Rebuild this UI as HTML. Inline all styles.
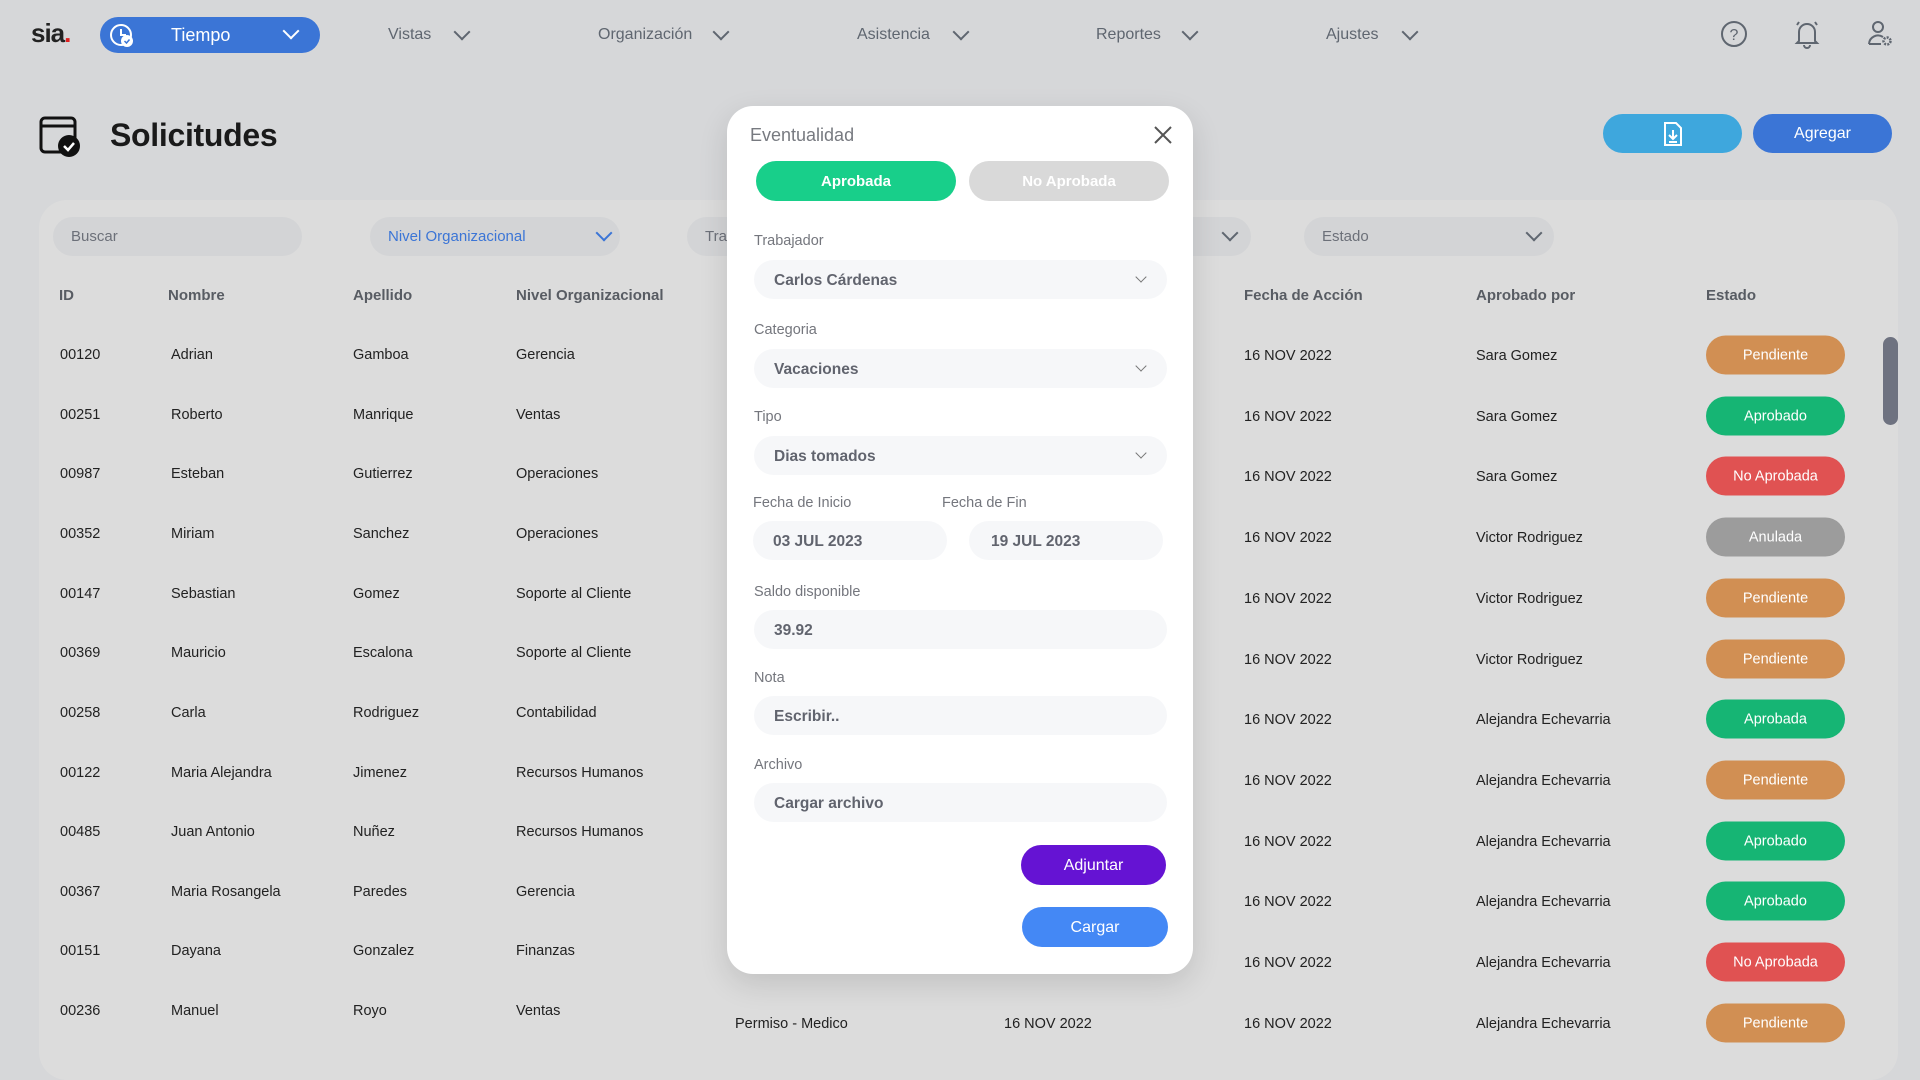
<!DOCTYPE html>
<html><head><meta charset="utf-8"><style>
*{margin:0;padding:0;box-sizing:border-box}
body{width:1920px;height:1080px;background:#d6d7d9;font-family:"Liberation Sans",sans-serif;position:relative;overflow:hidden;color:#222}
.a{position:absolute}
.nav{font-size:16px;color:#5f6670;top:26px}
.chev{position:absolute;width:12px;height:12px;border-right:2px solid #5f6670;border-bottom:2px solid #5f6670;transform:rotate(45deg)}
.card{left:39px;top:200px;width:1859px;height:880px;background:#dcdcdc;border-radius:28px}
.flt{position:absolute;top:217px;height:39px;border-radius:20px;background:#d3d4d6;font-size:15px;color:#6c7079;line-height:40px;padding-left:18px}
.th{position:absolute;top:287px;font-size:15px;color:#585c63;font-weight:bold}
.td{position:absolute;font-size:14.5px;color:#222;transform:translateY(-45%)}
.badge{position:absolute;left:1706px;width:139px;height:39px;border-radius:20px;color:#fff;font-size:14.5px;text-align:center;line-height:40px;transform:translateY(-50%)}
.P{background:#d18f53}.G{background:#16b574}.R{background:#e05252}.N{background:#9c9c9c}
.modal{left:727px;top:106px;width:466px;height:868px;background:#fff;border-radius:26px;box-shadow:0 10px 30px rgba(0,0,0,.12)}
.lbl{position:absolute;left:754px;font-size:14.5px;color:#74767d;transform:translateY(-45%)}
.inp{position:absolute;left:754px;width:413px;height:39px;border-radius:20px;background:#f6f7f9;font-size:15.5px;font-weight:bold;color:#61646e;line-height:41px;padding-left:20px}
.sc{position:absolute;right:22px;top:13px;width:8px;height:8px;border-right:1.5px solid #777;border-bottom:1.5px solid #777;transform:rotate(45deg)}
</style></head><body>
<div class="a" style="left:31px;top:18px;font-size:26px;font-weight:bold;color:#222;letter-spacing:-1px">sia<span style="color:#e02020">.</span></div>
<div class="a" style="left:100px;top:17px;width:220px;height:36px;border-radius:18px;background:#3b75d6"></div>
<svg class="a" style="left:108px;top:22px" width="28" height="28" viewBox="0 0 28 28"><circle cx="13" cy="13" r="10" fill="none" stroke="#fff" stroke-width="2"/><path d="M13 7v6h5" stroke="#fff" stroke-width="2" fill="none"/><circle cx="19" cy="19" r="6" fill="#fff"/><path d="M16.5 19l2 2 3-3.5" stroke="#3b75d6" stroke-width="1.5" fill="none"/></svg>
<div class="a" style="left:171px;top:25px;font-size:18px;color:#fff">Tiempo</div>
<div class="chev" style="left:285px;top:25px;border-color:#fff"></div>
<div class="a nav" style="left:388px">Vistas</div><div class="chev" style="left:456px;top:26px"></div>
<div class="a nav" style="left:598px">Organización</div><div class="chev" style="left:715px;top:26px"></div>
<div class="a nav" style="left:857px">Asistencia</div><div class="chev" style="left:955px;top:26px"></div>
<div class="a nav" style="left:1096px">Reportes</div><div class="chev" style="left:1184px;top:26px"></div>
<div class="a nav" style="left:1326px">Ajustes</div><div class="chev" style="left:1404px;top:26px"></div>
<svg class="a" style="left:1720px;top:20px" width="28" height="28" viewBox="0 0 28 28"><circle cx="14" cy="14" r="12" fill="none" stroke="#5f6670" stroke-width="2"/><text x="14" y="20" text-anchor="middle" font-size="16" fill="#5f6670" font-family="Liberation Sans">?</text></svg>
<svg class="a" style="left:1793px;top:19px" width="28" height="30" viewBox="0 0 28 30"><path d="M6 22V13a8 8 0 0116 0v9l2 2H4z" fill="none" stroke="#5f6670" stroke-width="2"/><path d="M11 26a3 3 0 006 0" fill="none" stroke="#5f6670" stroke-width="2"/><path d="M4 6l2-3M24 6l-2-3" stroke="#5f6670" stroke-width="2"/></svg>
<svg class="a" style="left:1866px;top:20px" width="28" height="28" viewBox="0 0 28 28"><circle cx="12" cy="7" r="5" fill="none" stroke="#5f6670" stroke-width="2"/><path d="M3 24a9 9 0 0114-7" fill="none" stroke="#5f6670" stroke-width="2"/><path d="M3 24h12" stroke="#5f6670" stroke-width="2"/><circle cx="21" cy="21" r="3.5" fill="none" stroke="#5f6670" stroke-width="2.5" stroke-dasharray="2 1.2"/></svg>
<svg class="a" style="left:39px;top:116px" width="44" height="42" viewBox="0 0 44 42"><rect x="2" y="2" width="34" height="34" rx="4" fill="none" stroke="#111" stroke-width="3"/><path d="M2 10h34" stroke="#111" stroke-width="3"/><circle cx="30" cy="30" r="11" fill="#111"/><path d="M25 30l4 4 6-7" stroke="#fff" stroke-width="2.5" fill="none"/></svg>
<div class="a" style="left:110px;top:117px;font-size:32px;font-weight:bold;color:#1a1a1a;letter-spacing:-0.3px">Solicitudes</div>
<div class="a" style="left:1603px;top:114px;width:139px;height:39px;border-radius:20px;background:#3ea7dd"></div>
<svg class="a" style="left:1663px;top:122px" width="20" height="24" viewBox="0 0 20 24"><path d="M2 1h11l5 5v17H2z" fill="none" stroke="#fff" stroke-width="2"/><path d="M10 8v9M6 13l4 4 4-4M6 20h8" stroke="#fff" stroke-width="2" fill="none"/></svg>
<div class="a" style="left:1753px;top:114px;width:139px;height:39px;border-radius:20px;background:#3b75d6;color:#fff;font-size:16px;text-align:center;line-height:40px">Agregar</div>
<div class="a card"></div>
<div class="flt" style="left:53px;width:249px">Buscar</div>
<div class="flt" style="left:370px;width:250px;color:#3b75d6">Nivel Organizacional<div class="chev" style="left:228px;top:10px;border-color:#3b75d6"></div></div>
<div class="flt" style="left:687px;width:564px">Tra<div class="chev" style="left:537px;top:10px"></div></div>
<div class="flt" style="left:1304px;width:250px">Estado<div class="chev" style="left:224px;top:10px"></div></div>
<div class="th" style="left:59px">ID</div><div class="th" style="left:168px">Nombre</div><div class="th" style="left:353px">Apellido</div><div class="th" style="left:516px">Nivel Organizacional</div>
<div class="th" style="left:1244px">Fecha de Acción</div><div class="th" style="left:1476px">Aprobado por</div><div class="th" style="left:1706px">Estado</div>
<div class="a" style="left:1883px;top:337px;width:15px;height:88px;border-radius:8px;background:#6e7280"></div>

<div class="td" style="left:60px;top:354px">00120</div><div class="td" style="left:171px;top:354px">Adrian</div><div class="td" style="left:353px;top:354px">Gamboa</div><div class="td" style="left:516px;top:354px">Gerencia</div>
<div class="td" style="left:60px;top:414px">00251</div><div class="td" style="left:171px;top:414px">Roberto</div><div class="td" style="left:353px;top:414px">Manrique</div><div class="td" style="left:516px;top:414px">Ventas</div>
<div class="td" style="left:60px;top:473px">00987</div><div class="td" style="left:171px;top:473px">Esteban</div><div class="td" style="left:353px;top:473px">Gutierrez</div><div class="td" style="left:516px;top:473px">Operaciones</div>
<div class="td" style="left:60px;top:533px">00352</div><div class="td" style="left:171px;top:533px">Miriam</div><div class="td" style="left:353px;top:533px">Sanchez</div><div class="td" style="left:516px;top:533px">Operaciones</div>
<div class="td" style="left:60px;top:593px">00147</div><div class="td" style="left:171px;top:593px">Sebastian</div><div class="td" style="left:353px;top:593px">Gomez</div><div class="td" style="left:516px;top:593px">Soporte al Cliente</div>
<div class="td" style="left:60px;top:652px">00369</div><div class="td" style="left:171px;top:652px">Mauricio</div><div class="td" style="left:353px;top:652px">Escalona</div><div class="td" style="left:516px;top:652px">Soporte al Cliente</div>
<div class="td" style="left:60px;top:712px">00258</div><div class="td" style="left:171px;top:712px">Carla</div><div class="td" style="left:353px;top:712px">Rodriguez</div><div class="td" style="left:516px;top:712px">Contabilidad</div>
<div class="td" style="left:60px;top:772px">00122</div><div class="td" style="left:171px;top:772px">Maria Alejandra</div><div class="td" style="left:353px;top:772px">Jimenez</div><div class="td" style="left:516px;top:772px">Recursos Humanos</div>
<div class="td" style="left:60px;top:831px">00485</div><div class="td" style="left:171px;top:831px">Juan Antonio</div><div class="td" style="left:353px;top:831px">Nuñez</div><div class="td" style="left:516px;top:831px">Recursos Humanos</div>
<div class="td" style="left:60px;top:891px">00367</div><div class="td" style="left:171px;top:891px">Maria Rosangela</div><div class="td" style="left:353px;top:891px">Paredes</div><div class="td" style="left:516px;top:891px">Gerencia</div>
<div class="td" style="left:60px;top:950px">00151</div><div class="td" style="left:171px;top:950px">Dayana</div><div class="td" style="left:353px;top:950px">Gonzalez</div><div class="td" style="left:516px;top:950px">Finanzas</div>
<div class="td" style="left:60px;top:1010px">00236</div><div class="td" style="left:171px;top:1010px">Manuel</div><div class="td" style="left:353px;top:1010px">Royo</div><div class="td" style="left:516px;top:1010px">Ventas</div>

<div class="td" style="left:1244px;top:355px">16 NOV 2022</div><div class="td" style="left:1476px;top:355px">Sara Gomez</div><div class="badge P" style="top:355px">Pendiente</div>
<div class="td" style="left:1244px;top:416px">16 NOV 2022</div><div class="td" style="left:1476px;top:416px">Sara Gomez</div><div class="badge G" style="top:416px">Aprobado</div>
<div class="td" style="left:1244px;top:476px">16 NOV 2022</div><div class="td" style="left:1476px;top:476px">Sara Gomez</div><div class="badge R" style="top:476px">No Aprobada</div>
<div class="td" style="left:1244px;top:537px">16 NOV 2022</div><div class="td" style="left:1476px;top:537px">Victor Rodriguez</div><div class="badge N" style="top:537px">Anulada</div>
<div class="td" style="left:1244px;top:598px">16 NOV 2022</div><div class="td" style="left:1476px;top:598px">Victor Rodriguez</div><div class="badge P" style="top:598px">Pendiente</div>
<div class="td" style="left:1244px;top:659px">16 NOV 2022</div><div class="td" style="left:1476px;top:659px">Victor Rodriguez</div><div class="badge P" style="top:659px">Pendiente</div>
<div class="td" style="left:1244px;top:719px">16 NOV 2022</div><div class="td" style="left:1476px;top:719px">Alejandra Echevarria</div><div class="badge G" style="top:719px">Aprobada</div>
<div class="td" style="left:1244px;top:780px">16 NOV 2022</div><div class="td" style="left:1476px;top:780px">Alejandra Echevarria</div><div class="badge P" style="top:780px">Pendiente</div>
<div class="td" style="left:1244px;top:841px">16 NOV 2022</div><div class="td" style="left:1476px;top:841px">Alejandra Echevarria</div><div class="badge G" style="top:841px">Aprobado</div>
<div class="td" style="left:1244px;top:901px">16 NOV 2022</div><div class="td" style="left:1476px;top:901px">Alejandra Echevarria</div><div class="badge G" style="top:901px">Aprobado</div>
<div class="td" style="left:1244px;top:962px">16 NOV 2022</div><div class="td" style="left:1476px;top:962px">Alejandra Echevarria</div><div class="badge R" style="top:962px">No Aprobada</div>
<div class="td" style="left:735px;top:1023px">Permiso - Medico</div><div class="td" style="left:1004px;top:1023px">16 NOV 2022</div>
<div class="td" style="left:1244px;top:1023px">16 NOV 2022</div><div class="td" style="left:1476px;top:1023px">Alejandra Echevarria</div><div class="badge P" style="top:1023px">Pendiente</div>

<div class="a modal"></div>
<div class="a" style="left:750px;top:125px;font-size:18px;color:#777a80">Eventualidad</div>
<svg class="a" style="left:1154px;top:126px" width="18" height="18" viewBox="0 0 18 18"><path d="M1 1l16 16M17 1L1 17" stroke="#555" stroke-width="2"/></svg>
<div class="a" style="left:756px;top:161px;width:200px;height:40px;border-radius:20px;background:#18cf8a;color:#fff;font-weight:bold;font-size:15px;text-align:center;line-height:41px">Aprobada</div>
<div class="a" style="left:969px;top:161px;width:200px;height:40px;border-radius:20px;background:#d9d9d9;color:#fff;font-weight:bold;font-size:15px;text-align:center;line-height:41px">No Aprobada</div>
<div class="lbl" style="top:240px">Trabajador</div>
<div class="inp" style="top:260px">Carlos Cárdenas<div class="sc"></div></div>
<div class="lbl" style="top:329px">Categoria</div>
<div class="inp" style="top:349px">Vacaciones<div class="sc"></div></div>
<div class="lbl" style="top:416px">Tipo</div>
<div class="inp" style="top:436px">Dias tomados<div class="sc"></div></div>
<div class="lbl" style="top:502px;left:753px">Fecha de Inicio</div>
<div class="lbl" style="top:502px;left:942px">Fecha de Fin</div>
<div class="inp" style="top:521px;left:753px;width:194px">03 JUL 2023</div>
<div class="inp" style="top:521px;left:969px;width:194px;padding-left:22px">19 JUL 2023</div>
<div class="lbl" style="top:591px">Saldo disponible</div>
<div class="inp" style="top:610px">39.92</div>
<div class="lbl" style="top:677px">Nota</div>
<div class="inp" style="top:696px">Escribir..</div>
<div class="lbl" style="top:764px">Archivo</div>
<div class="inp" style="top:783px">Cargar archivo</div>
<div class="a" style="left:1021px;top:845px;width:145px;height:40px;border-radius:20px;background:#6513d3;color:#fff;font-size:16px;text-align:center;line-height:41px">Adjuntar</div>
<div class="a" style="left:1022px;top:907px;width:146px;height:40px;border-radius:20px;background:#4488f5;color:#fff;font-size:16px;text-align:center;line-height:41px">Cargar</div>
</body></html>
